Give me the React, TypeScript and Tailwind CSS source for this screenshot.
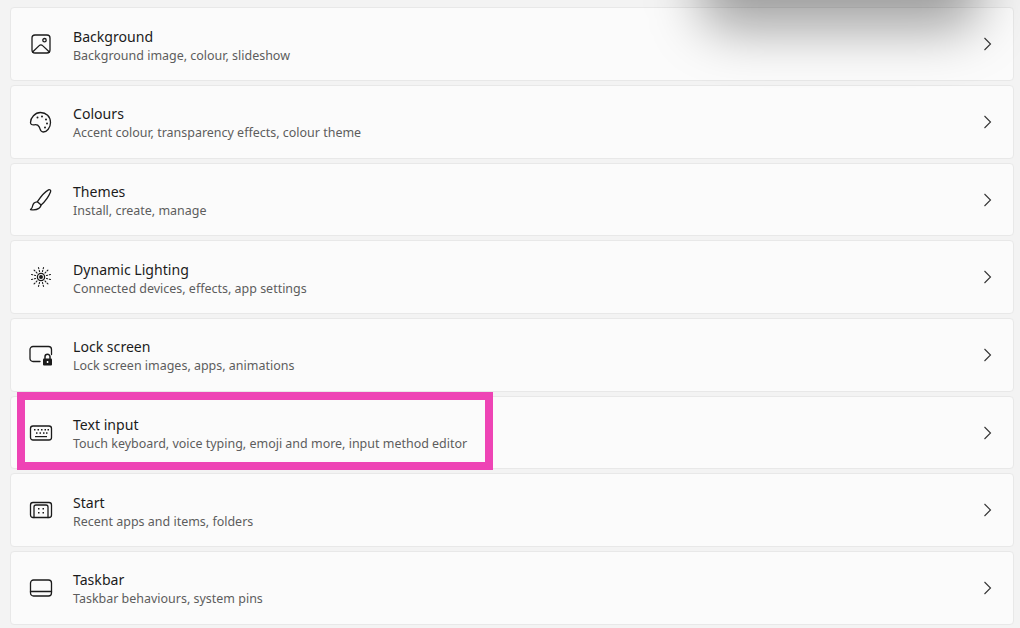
import type { ReactNode } from 'react';

const ink = {
  fill: 'none',
  stroke: '#1b1b1b',
  strokeWidth: 1.3,
  strokeLinecap: 'round' as const,
  strokeLinejoin: 'round' as const,
};

function Icon({ children }: { children: ReactNode }) {
  return (
    <svg width="24" height="24" viewBox="0 0 24 24" className="shrink-0">
      {children}
    </svg>
  );
}

const BackgroundIcon = () => (
  <Icon>
    <g {...ink}>
      <rect x="3" y="3" width="18" height="18" rx="3" />
      <path d="M3.6 20l6.6-6.4a2.4 2.4 0 0 1 3.4 0l6.8 6.4" />
      <circle cx="15.5" cy="8.2" r="1.7" />
    </g>
  </Icon>
);

const ColoursIcon = () => (
  <Icon>
    <path
      {...ink}
      d="M11.5 2.5c5.6 0 10 4.2 10 10 0 5.3-3.6 9.5-7.3 9.5-3.2 0-2.9-3.3-4-5.2-1-1.8-3.2-2.3-5-2-2 .3-3.7-.4-3.7-2.4 0-4.7 4.5-9.9 10-9.9z"
    />
    <g fill="#1b1b1b">
      <circle cx="8.5" cy="7.5" r="1" />
      <circle cx="13" cy="6.5" r="1" />
      <circle cx="17" cy="9.5" r="1" />
      <circle cx="18" cy="13.5" r="1" />
      <circle cx="16" cy="17.5" r="1" />
    </g>
  </Icon>
);

const ThemesIcon = () => (
  <Icon>
    <g {...ink}>
      <path d="M19.5 1.8c1.3-.6 2.6.6 2.1 1.9-1.6 4-5.2 9.5-9.5 13.3l-3.7-3.3C11.5 9 15.6 3.8 19.5 1.8z" />
      <path d="M8.3 13.8c-2.6.2-4.3 1.8-4.7 4.2-.2 1.5-.8 2.6-2.1 3.6 3.4.6 6.4.1 8.3-1.2 1.5-1.1 2.3-2.3 2.2-3.7" />
    </g>
  </Icon>
);

// dotted rays around the ring
const rayAngles = Array.from({ length: 12 }, (_, i) => (i * Math.PI) / 6 + Math.PI / 12);

const LightingIcon = () => (
  <Icon>
    <g {...ink}>
      <circle cx="12" cy="12" r="3.6" />
      <circle cx="12" cy="12" r="1.3" fill="#1b1b1b" />
      {rayAngles.map((a) => (
        <path
          key={a}
          strokeWidth={1.1}
          strokeDasharray="1.2 1.8"
          d={`M${12 + 5.6 * Math.cos(a)} ${12 + 5.6 * Math.sin(a)}L${12 + 10.8 * Math.cos(a)} ${12 + 10.8 * Math.sin(a)}`}
        />
      ))}
    </g>
  </Icon>
);

const LockScreenIcon = () => (
  <Icon>
    <path {...ink} d="M11 18.5H4a3 3 0 0 1-3-3V6.5a3 3 0 0 1 3-3h15.5a3 3 0 0 1 3 3v5" />
    <rect x="14" y="15.5" width="9" height="7" rx="1" fill="#1b1b1b" />
    <path {...ink} strokeWidth={1.5} d="M16 15.5v-1.7a2.5 2.5 0 0 1 5 0v1.7" />
    <rect x="17.8" y="18" width="1.5" height="2" fill="#fff" />
  </Icon>
);

const KeyboardIcon = () => (
  <Icon>
    <rect {...ink} x="1.5" y="5" width="21" height="14" rx="2.5" />
    <g fill="#1b1b1b">
      <rect x="5" y="8" width="1.5" height="1.5" />
      <rect x="8.5" y="8" width="1.5" height="1.5" />
      <rect x="12" y="8" width="1.5" height="1.5" />
      <rect x="15.5" y="8" width="1.5" height="1.5" />
      <rect x="18.5" y="8" width="1.5" height="1.5" />
      <rect x="7" y="11.3" width="1.5" height="1.5" />
      <rect x="10.5" y="11.3" width="1.5" height="1.5" />
      <rect x="14" y="11.3" width="1.5" height="1.5" />
      <rect x="17" y="11.3" width="1.5" height="1.5" />
      <rect x="6" y="15" width="12" height="1.2" />
    </g>
  </Icon>
);

const StartIcon = () => (
  <Icon>
    <g {...ink}>
      <rect x="1.5" y="4.5" width="21" height="15" rx="2.5" />
      <path d="M5 19.5V9a2 2 0 0 1 2-2h10a2 2 0 0 1 2 2v10.5" />
    </g>
    <g fill="#1b1b1b">
      <rect x="9" y="10" width="1.5" height="1.5" />
      <rect x="13.5" y="10" width="1.5" height="1.5" />
      <rect x="9" y="14" width="1.5" height="1.5" />
      <rect x="13.5" y="14" width="1.5" height="1.5" />
    </g>
  </Icon>
);

const TaskbarIcon = () => (
  <Icon>
    <g {...ink}>
      <rect x="1.5" y="4" width="21" height="16" rx="3" />
      <path d="M1.5 15.5h21" />
    </g>
  </Icon>
);

const rows = [
  { title: 'Background', desc: 'Background image, colour, slideshow', icon: <BackgroundIcon /> },
  { title: 'Colours', desc: 'Accent colour, transparency effects, colour theme', icon: <ColoursIcon /> },
  { title: 'Themes', desc: 'Install, create, manage', icon: <ThemesIcon /> },
  { title: 'Dynamic Lighting', desc: 'Connected devices, effects, app settings', icon: <LightingIcon /> },
  { title: 'Lock screen', desc: 'Lock screen images, apps, animations', icon: <LockScreenIcon /> },
  { title: 'Text input', desc: 'Touch keyboard, voice typing, emoji and more, input method editor', icon: <KeyboardIcon /> },
  { title: 'Start', desc: 'Recent apps and items, folders', icon: <StartIcon /> },
  { title: 'Taskbar', desc: 'Taskbar behaviours, system pins', icon: <TaskbarIcon /> },
];

export default function App() {
  return (
    <div className="relative h-[628px] w-[1020px] overflow-hidden bg-[#f3f3f3] font-['Noto_Sans',sans-serif]">
      <div className="flex flex-col gap-[4px] pt-[7.3px] pl-[9.5px] pr-[6.5px]">
        {rows.map((row) => (
          <div
            key={row.title}
            className="flex h-[73.7px] shrink-0 items-center rounded-[4px] border border-[#e8e8e8] bg-[#fbfbfb] pl-[18px] pr-[19px]"
          >
            {row.icon}
            <div className="ml-[20.5px] mt-[3px] flex min-w-0 flex-col">
              <span className="text-[14.1px] leading-[19px] text-[#1b1b1b]">{row.title}</span>
              <span className="text-[12.48px] leading-[19px] text-[#5d5d5d]">{row.desc}</span>
            </div>
            <svg width="12" height="14" viewBox="0 0 12 14" className="ml-auto shrink-0">
              <path d="M2.5 1 8.5 7l-6 6" fill="none" stroke="#333" strokeWidth="1.1" />
            </svg>
          </div>
        ))}
      </div>
      {/* window shadow falling in from the top */}
      <div className="absolute left-[700px] top-[-70px] h-[100px] w-[280px] rounded-[30px] bg-black/35 blur-[26px]" />
      {/* annotation box */}
      <div className="absolute left-[17px] top-[392px] h-[78px] w-[476px] border-[8px] border-[#ee44b5]" />
    </div>
  );
}
